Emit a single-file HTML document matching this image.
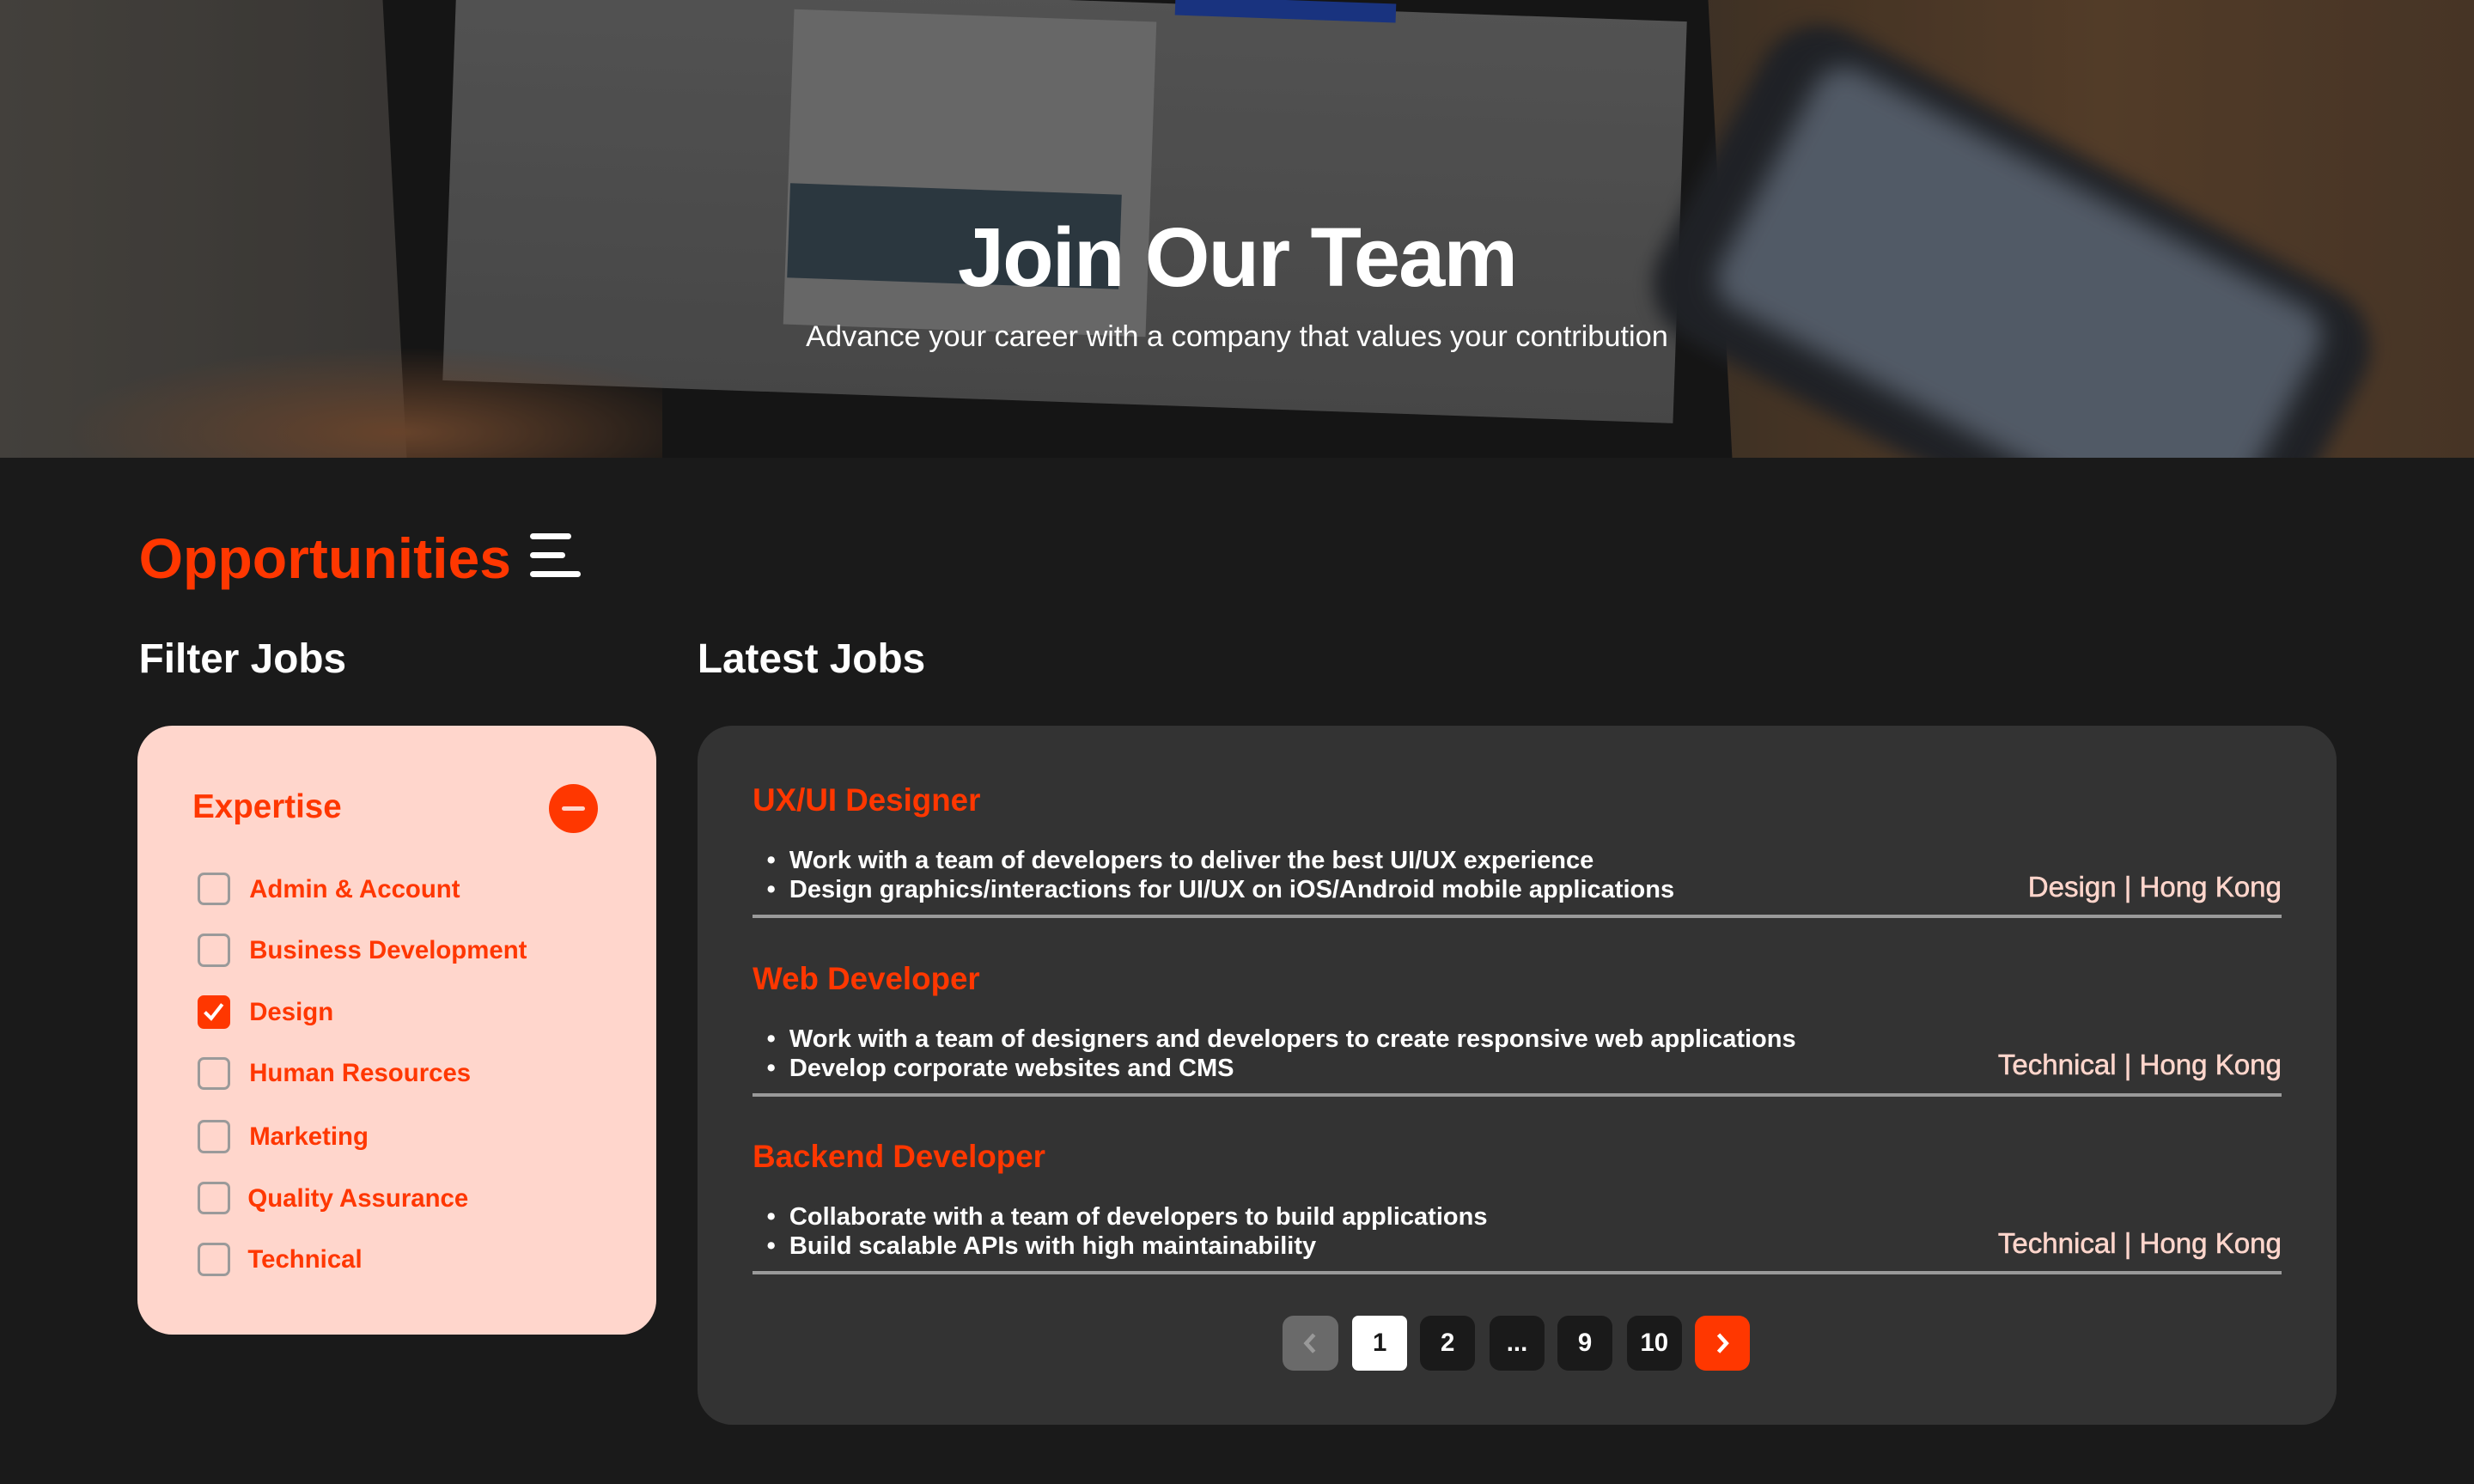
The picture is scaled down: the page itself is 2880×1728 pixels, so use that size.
<!DOCTYPE html>
<html><head><meta charset="utf-8"><style>
*{margin:0;padding:0;box-sizing:border-box}
html,body{width:2880px;height:1728px;overflow:hidden;background:#1a1a1a}
#w{zoom:1.836735;width:1568px;height:941px;position:relative;font-family:"Liberation Sans",sans-serif;background:#1a1a1a}
.hero{position:absolute;left:0;top:0;width:1568px;height:290px;overflow:hidden;background:linear-gradient(90deg,#5a5650 0%,#4a4744 18%,#2a2a2a 30%,#3a3a3a 60%,#5a4430 72%,#6e5036 85%,#5e4632 100%)}
.b{position:absolute}
.t{position:absolute;color:#fff;text-align:center;width:1568px}
.ab{position:absolute}
.cb{position:absolute;left:125px;width:21px;height:21px;border:2px solid #9a9a9a;border-radius:4px}
.lbl{position:absolute;left:158px;color:#ff3700;font-size:16px;font-weight:bold;line-height:20px}
.jt{position:absolute;left:477px;color:#ff3700;font-size:20px;font-weight:bold}
.jl{position:absolute;left:486px;color:#fff;font-size:15.8px;font-weight:bold;line-height:18.5px}
.jr{position:absolute;right:122px;color:#ffd6cc;font-size:18px;line-height:22px;-webkit-text-stroke:0.3px #ffd6cc}
.hr{position:absolute;left:477px;width:969px;height:2px;background:#9a9a9a}
.pg{position:absolute;top:834px;width:35px;height:35px;border-radius:7px;background:#1a1a1a;color:#fff;font-weight:bold;font-size:16px;text-align:center;line-height:35px}
</style></head><body><div id="w">
<div class="hero">
 <div class="b" style="left:250px;top:-10px;width:840px;height:300px;background:#1c1c1c;transform:skewX(3deg)"></div>
 <div class="b" style="left:285px;top:0;width:780px;height:255px;background:linear-gradient(180deg,#7c7c7c,#6a6a6a);opacity:.85;transform:rotate(2deg)"></div>
 <div class="b" style="left:500px;top:10px;width:230px;height:200px;background:#8a8a8a;transform:rotate(2deg)"></div>
 <div class="b" style="left:500px;top:120px;width:210px;height:60px;background:#3a4a55;transform:rotate(2deg)"></div>
 <div class="b" style="left:745px;top:0;width:140px;height:12px;background:#2244aa;transform:rotate(2deg)"></div>
 <div class="b" style="left:0;top:210px;width:420px;height:80px;background:radial-gradient(ellipse at 60% 80%,#8a5a3a,transparent 60%)"></div>
 <div class="b" style="left:1060px;top:90px;width:430px;height:220px;background:#2a2d33;border-radius:40px;transform:rotate(28deg);filter:blur(6px)"></div>
 <div class="b" style="left:1100px;top:110px;width:360px;height:170px;background:#6d7888;border-radius:20px;transform:rotate(28deg);filter:blur(8px)"></div>
 <div class="b" style="left:0;top:0;width:1568px;height:290px;background:rgba(0,0,0,.25)"></div>
 <div class="t" style="top:133px;font-size:53px;font-weight:bold;letter-spacing:-1px">Join Our Team</div>
 <div class="t" style="top:203px;font-size:18.7px">Advance your career with a company that values your contribution</div>
</div>
<div class="ab" style="left:88px;top:334px;color:#ff3700;font-size:36px;font-weight:bold">Opportunities</div>
<div class="ab" style="left:336px;top:338px;width:26px;height:4px;background:#fff;border-radius:2px"></div>
<div class="ab" style="left:336px;top:350px;width:22px;height:4px;background:#fff;border-radius:2px"></div>
<div class="ab" style="left:336px;top:362px;width:32px;height:4px;background:#fff;border-radius:2px"></div>
<div class="ab" style="left:88px;top:403px;color:#fff;font-size:26px;font-weight:bold">Filter Jobs</div>
<div class="ab" style="left:442px;top:403px;color:#fff;font-size:26px;font-weight:bold">Latest Jobs</div>
<div class="ab" style="left:87px;top:460px;width:329px;height:386px;background:#ffd6cc;border-radius:22px"></div>
<div class="ab" style="left:122px;top:500px;color:#ff3700;font-size:21px;font-weight:bold">Expertise</div>
<div class="ab" style="left:348px;top:497px;width:31px;height:31px;border-radius:50%;background:#ff3700"></div>
<div class="ab" style="left:356px;top:511px;width:15px;height:3px;background:#ffd6cc;border-radius:2px"></div>
<div class="cb" style="top:553px"></div><div class="lbl" style="top:554px">Admin &amp; Account</div>
<div class="cb" style="top:592px"></div><div class="lbl" style="top:593px">Business Development</div>
<div class="cb" style="top:631px;background:#ff3700;border-color:#ff3700"><svg width="17" height="17" viewBox="0 0 17 17" style="position:absolute;left:0;top:0"><path d="M3 9l4 4 7-9" stroke="#fff" stroke-width="2.2" fill="none"/></svg></div><div class="lbl" style="top:632px">Design</div>
<div class="cb" style="top:670px"></div><div class="lbl" style="top:671px">Human Resources</div>
<div class="cb" style="top:710px"></div><div class="lbl" style="top:711px">Marketing</div>
<div class="cb" style="top:749px"></div><div class="lbl" style="top:750px;left:157px">Quality Assurance</div>
<div class="cb" style="top:788px"></div><div class="lbl" style="top:789px;left:157px">Technical</div>

<div class="ab" style="left:442px;top:460px;width:1039px;height:443px;background:#333;border-radius:22px"></div>
<div class="jt" style="top:496px">UX/UI Designer</div>
<div class="jl" style="top:537px">•&nbsp; Work with a team of developers to deliver the best UI/UX experience<br>•&nbsp; Design graphics/interactions for UI/UX on iOS/Android mobile applications</div>
<div class="jr" style="top:552px">Design | Hong Kong</div>
<div class="hr" style="top:580px"></div>
<div class="jt" style="top:609px">Web Developer</div>
<div class="jl" style="top:650px">•&nbsp; Work with a team of designers and developers to create responsive web applications<br>•&nbsp; Develop corporate websites and CMS</div>
<div class="jr" style="top:665px">Technical | Hong Kong</div>
<div class="hr" style="top:693px"></div>
<div class="jt" style="top:722px">Backend Developer</div>
<div class="jl" style="top:763px">•&nbsp; Collaborate with a team of developers to build applications<br>•&nbsp; Build scalable APIs with high maintainability</div>
<div class="jr" style="top:778px">Technical | Hong Kong</div>
<div class="hr" style="top:806px"></div>

<div class="pg" style="left:813px;background:#6a6a6a"><svg width="35" height="35" viewBox="0 0 35 35"><path d="M20 12l-5 5.5 5 5.5" stroke="#999" stroke-width="2.5" fill="none"/></svg></div>
<div class="pg" style="left:857px;background:#fff;color:#1a1a1a;border-radius:4px">1</div>
<div class="pg" style="left:900px">2</div>
<div class="pg" style="left:944px">...</div>
<div class="pg" style="left:987px">9</div>
<div class="pg" style="left:1031px">10</div>
<div class="pg" style="left:1074px;background:#ff3700"><svg width="35" height="35" viewBox="0 0 35 35"><path d="M15 12l5 5.5-5 5.5" stroke="#fff" stroke-width="2.5" fill="none"/></svg></div>
</div></body></html>
